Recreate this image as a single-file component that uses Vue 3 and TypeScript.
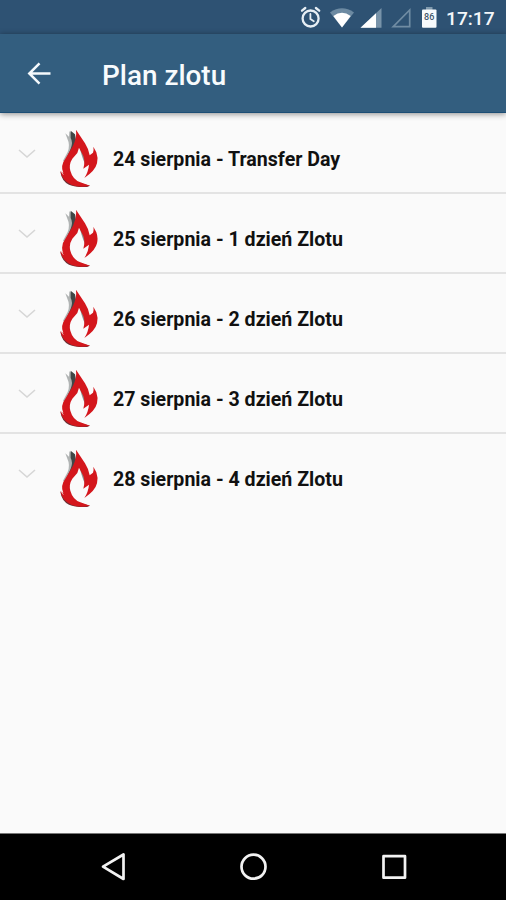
<script setup lang="ts">
interface Day {
  id: number
  label: string
}

const time: string = '17:17'
const battery: string = '86'
const title: string = 'Plan zlotu'
const days: Day[] = [
  { id: 24, label: '24 sierpnia - Transfer Day' },
  { id: 25, label: '25 sierpnia - 1 dzień Zlotu' },
  { id: 26, label: '26 sierpnia - 2 dzień Zlotu' },
  { id: 27, label: '27 sierpnia - 3 dzień Zlotu' },
  { id: 28, label: '28 sierpnia - 4 dzień Zlotu' },
]
</script>

<template>
  <div class="screen">
    <header class="status">
      <svg class="status-icons" viewBox="0 0 150 34" width="150" height="34">
        <g fill="none" stroke="#e6eef4" stroke-linecap="round">
          <circle cx="20.6" cy="18.5" r="8" stroke-width="2.3" />
          <path d="M20.4 14v5l3.4 2.2" stroke-width="1.8" />
          <path d="M12 10.7l3.3-2.7M29.2 10.7L25.9 8" stroke-width="2.3" />
        </g>
        <path d="M40 12.4Q52 4 64 12.4L52 27.5z" fill="#6c8aa2" />
        <path d="M43.3 16Q52 9.5 60.7 16L52 27.5z" fill="#fff" />
        <path d="M91.5 8v19.8H70.5z" fill="#7893a9" />
        <path d="M86 13.2v14.6H70.5z" fill="#fff" />
        <path d="M119.7 10v16.7h-16.5z" fill="none" stroke="#708ca3" stroke-width="1.7" />
        <path d="M136 7h6.5v3H136z" fill="#819bae" />
        <rect x="132" y="9.5" width="14.5" height="18.3" rx="1" fill="#f7fafc" />
        <text x="139.2" y="20" text-anchor="middle" class="battery">{{ battery }}</text>
      </svg>
      <span class="time">{{ time }}</span>
    </header>

    <div class="toolbar">
      <svg class="back" viewBox="0 0 26 26" width="26" height="26">
        <path d="M25.5 12.5H4.5M14.5 2.3L4.3 12.5l10.2 10.2" fill="none" stroke="#f5f9fc" stroke-width="2.5" />
      </svg>
      <h1>{{ title }}</h1>
    </div>

    <main class="list">
      <div v-for="day in days" :key="day.id" class="row">
        <svg class="chevron" viewBox="0 0 18 10" width="18" height="10">
          <path d="M1 1l8 7 8-7" fill="none" stroke="#d6d6d6" stroke-width="1.6" />
        </svg>
        <svg class="flame" viewBox="28 27 120 180" width="40" height="60">
          <path d="M47 40L58 50 59 34 70 43 78 65 70 96 47 126 40 122 54 96Q62 74 53 56z" fill="#b1b4b4" />
          <path d="M63 32L76 43 80 66 60 106 50 116 64 84Q70 66 63 54z" fill="#414747" />
          <path d="M88 76L106 84 114 104 114 119 106 132 100 117 96 105z" fill="#898f8f" />
          <path d="M32 155Q36 183 58 194 79 203 112 201L121 197 94 190 50 175z" fill="#6b3035" />
          <path d="M79 29L94 52 106 70Q117 87 120 106L130 98Q133 90 131 80L140 97Q146 113 142 130 137 152 104 174 116 156 118 134L101 146Q107 126 101 108L88 83 83 99 68 116Q57 133 62 152 69 178 92 187L121 197Q91 204 66 195 36 181 32 152L41 160Q31 137 48 115L70 77Q82 52 79 29z" fill="#d4161c" />
          <path d="M33 153l8 11" fill="none" stroke="#f7f7f7" stroke-width="2" />
        </svg>
        <span class="label">{{ day.label }}</span>
      </div>
    </main>

    <nav class="navigation">
      <svg viewBox="0 0 506 66" width="506" height="66" fill="none" stroke="#f2f2f2" stroke-width="2.7" stroke-linejoin="round">
        <path d="M123.500 20.500v24.500L103 32.700z" />
        <circle cx="253.500" cy="32.700" r="12" />
        <rect x="383.500" y="22.200" width="21.500" height="21.500" />
      </svg>
    </nav>
  </div>
</template>

<style>
body {
  margin: 0;
}
</style>

<style scoped>
.screen {
  width: 506px;
  height: 900px;
  display: flex;
  flex-direction: column;
  background: #fafafa;
  font-family: Roboto, sans-serif;
  overflow: hidden;
}
svg {
  display: block;
  flex: none;
}
.status {
  height: 34px;
  flex: none;
  display: flex;
  padding-left: 290px;
  background: #2e5273;
  color: #f3f7fa;
}
.battery {
  font-size: 9px;
  font-weight: 500;
  fill: #3d5569;
}
.time {
  margin-left: 6px;
  font-size: 19.2px;
  font-weight: 500;
  line-height: 37px;
}
.toolbar {
  height: 79px;
  flex: none;
  box-sizing: border-box;
  display: flex;
  align-items: center;
  padding-left: 25px;
  background: #335e7f;
  border-bottom: 1px solid #1d4e75;
  box-shadow: 0 1px 6px rgba(0, 0, 0, 0.45);
  z-index: 1;
}
.back {
  margin-top: 2px;
}
h1 {
  margin: 5px 0 0 51px;
  color: #f8fbfd;
  font-size: 27.9px;
  font-weight: 500;
  line-height: 35px;
}
.list {
  flex: 1;
  padding-top: 1px;
}
.row {
  height: 80px;
  box-sizing: border-box;
  display: flex;
  align-items: flex-start;
  padding-left: 18px;
  border-bottom: 2px solid #e3e3e3;
}
.row:last-child {
  border-bottom: 0;
}
.chevron {
  margin-top: 35px;
}
.flame {
  margin: 15px 0 0 23px;
}
.label {
  margin: 33px 0 0 14px;
  color: #111;
  font-size: 19.6px;
  font-weight: 700;
  line-height: 26px;
  white-space: nowrap;
}
.navigation {
  height: 66px;
  flex: none;
  background: #000;
  border-top: 1px solid #777;
}
</style>
